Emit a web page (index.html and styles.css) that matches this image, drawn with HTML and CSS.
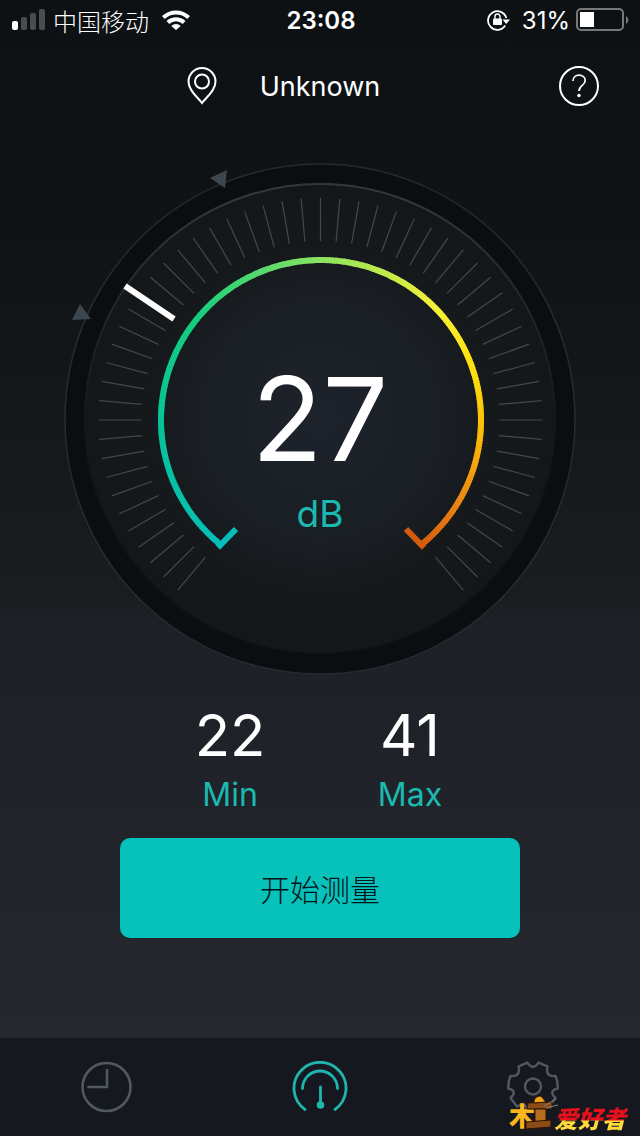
FILE: index.html
```html
<!DOCTYPE html>
<html lang="zh-CN">
<head>
<meta charset="utf-8">
<meta name="viewport" content="width=device-width, initial-scale=1">
<title>dB</title>
<link rel="stylesheet" href="styles.css">
</head>
<body>
<div class="app">
  <header class="status">
    <div class="status-left">
      <svg class="signal" width="34" height="22" viewBox="0 0 34 22" aria-hidden="true">
        <rect x="0" y="12" width="6" height="9" rx="2" fill="#fff"/>
        <g fill="#4b4c4f"><rect x="9" y="8" width="6" height="13" rx="2"/><rect x="18" y="4" width="6" height="17" rx="2"/><rect x="27" y="0" width="6" height="21" rx="2"/></g>
      </svg>
      <span class="carrier">中国移动</span>
      <svg class="wifi" width="28" height="20" viewBox="0 0 28 20" aria-hidden="true">
        <g fill="none" stroke="#fff" stroke-width="4"><path d="M1.400 7.500A18.300 18.300 0 0 1 26.600 7.500"/><path d="M5.900 12.500A12 12 0 0 1 22.100 12.500"/></g>
        <path d="M9.300 16A6.700 6.700 0 0 1 18.700 16L14 20Z" fill="#fff"/>
      </svg>
    </div>
    <time class="clock">23:08</time>
    <div class="status-right">
      <svg class="lock" width="23" height="22" viewBox="0 0 23 22" aria-hidden="true">
        <path d="M18.200 16.500A9.300 9.300 0 1 1 19.300 9" fill="none" stroke="#fff" stroke-width="1.800"/>
        <path d="M15.500 10.500H23L19.200 15Z" fill="#fff"/>
        <rect x="6" y="9.500" width="9" height="6.500" rx="1" fill="#fff"/>
        <path d="M8 10V7.500a2.500 2.500 0 0 1 5 0V10" fill="none" stroke="#fff" stroke-width="1.400"/>
      </svg>
      <span>31%</span>
      <svg class="battery" width="54" height="24" viewBox="0 0 54 24" aria-hidden="true">
        <rect x="1" y="1" width="46" height="21" rx="4" fill="none" stroke="#77787a" stroke-width="2"/>
        <rect x="4" y="4" width="14" height="15" fill="#fff"/>
        <path d="M50 8a4.500 4.500 0 0 1 0 8Z" fill="#77787a"/>
      </svg>
    </div>
  </header>

  <div class="topbar">
    <div class="place">
      <svg width="30" height="38" viewBox="0 0 30 38" fill="none" stroke="#fff" stroke-width="2" aria-hidden="true">
        <path d="M15 36C11 30.500 1.500 24 1.500 14.500a13.500 13.500 0 0 1 27 0C28.500 24 19 30.500 15 36Z"/>
        <circle cx="15" cy="14.500" r="7"/>
      </svg>
      <h1 class="place-name">Unknown</h1>
    </div>
    <button class="help" type="button" aria-label="帮助">
      <svg width="42" height="42" viewBox="0 0 42 42" fill="none" stroke="#fff" aria-hidden="true">
        <circle cx="21" cy="21" r="19" stroke-width="2"/>
        <path d="M15 16c0-3.500 2.500-5.800 6-5.800s6.200 2.200 6.200 5.400c0 5-6.200 4.700-6.200 10.400" stroke-width="1.700"/>
        <circle cx="21" cy="30.500" r="1.700" fill="#fff" stroke="none"/>
      </svg>
    </button>
  </div>

  <main class="main">
    <section class="gauge">
      <div class="dial">
        <svg class="dial-face" viewBox="0 0 520 520" aria-hidden="true">
          <defs>
            <radialGradient id="disc"><stop offset="0" stop-color="#1e222b"/><stop offset=".5" stop-color="#1a1f25"/><stop offset=".72" stop-color="#15191c"/><stop offset="1" stop-color="#13171a"/></radialGradient>
            <linearGradient id="rim" x1="0" y1="0" x2="0" y2="1"><stop offset="0" stop-color="#34383c"/><stop offset=".5" stop-color="#14181b"/><stop offset="1" stop-color="#0c0f12"/></linearGradient>
          </defs>
          <circle cx="260" cy="260" r="255" fill="#0a0e11" stroke="#272b2f" stroke-width="1.500"/>
          <circle cx="260" cy="260" r="235" fill="url(#disc)" stroke="url(#rim)" stroke-width="2"/>
          <g id="ticks" stroke="#43484e" stroke-width="1.200"></g>
          <path d="M65 127L114 160" stroke="#fff" stroke-width="6"/>
          <g fill="#3d464f"><path d="M150 19L167 11L165 29Z"/><path d="M20 145L31 160L12 161Z"/></g>
          <g id="arc" fill="none" stroke-width="6"></g>
          <path d="M157.500 384L160 386.500L176 370" fill="none" stroke="#08bdb8" stroke-width="6"/>
          <path d="M364.500 384L362 386.500L346 370" fill="none" stroke="#d55b0c" stroke-width="6"/>
        </svg>
        <div class="reading">
          <span class="value">27</span>
          <span class="unit">dB</span>
        </div>
      </div>
    </section>

    <dl class="stats">
      <div class="stat"><dt>Min</dt><dd>22</dd></div>
      <div class="stat"><dt>Max</dt><dd>41</dd></div>
    </dl>

    <button class="start" type="button">开始测量</button>
  </main>

  <nav class="tabs">
    <button class="tab" type="button" aria-label="历史">
      <svg width="52" height="52" viewBox="0 0 52 52" fill="none" stroke="currentColor" stroke-width="2.600" aria-hidden="true"><circle cx="25.500" cy="26" r="24"/><path d="M26 9V26H7.500" stroke-linecap="round"/></svg>
    </button>
    <button class="tab tab-active" type="button" aria-label="测量">
      <svg width="56" height="52" viewBox="0 0 56 52" fill="none" stroke="currentColor" stroke-width="2.800" stroke-linecap="round" aria-hidden="true"><path d="M13 48.500A26 26 0 1 1 43 48.500"/><path d="M10.500 27.500A17.500 17.500 0 0 1 45.500 27.500"/><path d="M28.500 26V44"/><circle cx="28.500" cy="44" r="2.400" fill="currentColor"/></svg>
    </button>
    <button class="tab" type="button" aria-label="设置">
      <svg width="52" height="54" viewBox="0 0 52 54" fill="none" stroke="currentColor" stroke-width="2.400" stroke-linejoin="round" aria-hidden="true"><path d="M20.400 2.600Q26 11 31.600 2.600L40.500 6.500Q38 17 48.500 16Q51 21 50.700 28.500Q41 31 48.500 38L42 46.500Q33 41 31.600 51.400H20.400Q19 41 10 46.500L3.500 38Q11 31 1.300 28.500Q1 21 3.500 16Q14 17 11.500 6.500Z"/><circle cx="26" cy="26.500" r="8"/></svg>
    </button>
  </nav>

  <div class="watermark">
    <svg class="mark" width="50" height="40" viewBox="0 0 50 40" aria-hidden="true">
      <text class="mark-wood" x="1" y="32">木</text>
      <g stroke="#2b1300" stroke-width="1"><path d="M20 9L44 8V15H19Z" fill="#8a4d16"/><path d="M27 15H38V28H27Z" fill="#b76c22"/><path d="M18 28L43 26V33L18 35Z" fill="#8a4d16"/><path d="M26 7Q27 2 33 2L38 8L26 9Z" fill="#f0a51a"/></g>
      <path d="M36 12L48 5M38 14L50 11" stroke="#8b8578"/>
    </svg>
    <span class="mark-name">爱好者</span>
  </div>
</div>
<script src="gauge.js"></script>
</body>
</html>
```
FILE: styles.css
```css
* { box-sizing: border-box; }
body {
  margin: 0;
  background: #23272e;
  color: #fff;
  font-family: Inter, "Noto Sans CJK SC", sans-serif;
}
button { border: 0; padding: 0; background: none; color: inherit; font: inherit; cursor: pointer; }
svg { display: block; flex: none; }
h1, dl, dd { margin: 0; font-weight: 400; }
.app {
  position: relative;
  display: flex;
  flex-direction: column;
  min-height: 100vh;
  background: linear-gradient(#0d1113 0, #0f1315 20%, #191d1f 52%, #1d2127 55%, #24272e 90%);
}
.status {
  display: grid;
  grid-template-columns: 1fr auto 1fr;
  align-items: center;
  height: 40px;
  padding: 0 10px 0 12px;
  font-size: 24px;
}
.status-left, .status-right { display: flex; align-items: center; }
.status-left { gap: 7px; }
.carrier { font-weight: 300; }
.wifi { margin-left: 6px; }
.status-right { justify-content: flex-end; gap: 6px; }
.lock { margin-right: 6px; }
.clock { font-weight: 600; }
.topbar {
  display: grid;
  grid-template-columns: 1fr auto 1fr;
  align-items: center;
  height: 92px;
  padding: 0 40px;
}
.place { grid-column: 2; display: flex; align-items: center; gap: 43px; margin-right: 73px; }
.place-name { font-size: 27px; }
.help { justify-self: end; }
.main { flex: 1; display: flex; flex-direction: column; align-items: center; }
.gauge { width: 100%; display: flex; justify-content: center; padding: 0 40px; margin-top: 27px; }
.dial { display: grid; width: 100%; max-width: 520px; }
.dial-face, .reading { grid-area: 1 / 1; }
.dial-face { width: 100%; }
.reading { display: flex; flex-direction: column; align-items: center; justify-content: center; padding-top: 50px; }
.value { font-size: 116px; line-height: 140px; }
.unit { font-size: 37px; line-height: 50px; color: #1bb9b0; }
.stats { display: grid; grid-template-columns: 180px 180px; margin-top: 20px; }
.stat { display: flex; flex-direction: column-reverse; align-items: center; }
.stat dt { font-size: 32px; line-height: 48px; color: #1bb9b0; }
.stat dd { font-size: 58px; line-height: 72px; }
.start {
  width: 62.5%;
  height: 100px;
  margin-top: 19px;
  border-radius: 10px;
  background: #07c1bb;
  color: #061517;
  font-size: 30px;
  font-weight: 300;
}
.tabs { display: grid; grid-template-columns: repeat(3, 1fr); height: 98px; background: #15181f; }
.tab { display: flex; align-items: center; justify-content: center; color: #505862; }
.tab-active { color: #1fb5ad; }
.watermark { position: absolute; right: 12px; bottom: 2px; display: flex; align-items: flex-end; }
.mark { overflow: visible; margin-right: -4px; }
.mark-wood { font: 900 26px "Noto Sans CJK SC", sans-serif; fill: #f8b51c; }
.mark-name {
  padding: 0 2px 2px 0;
  font: italic 900 24px/28px "Noto Sans CJK SC", sans-serif;
  background: linear-gradient(#e8101c 52%, #ffd83a 58%);
  background-clip: text;
  -webkit-background-clip: text;
  color: transparent;
}
```
FILE: gauge.js
```js
const NS = 'http://www.w3.org/2000/svg';
const point = (cx, cy, r, deg) => {
  const a = deg * Math.PI / 180;
  return `${(cx + r * Math.sin(a)).toFixed(2)} ${(cy - r * Math.cos(a)).toFixed(2)}`;
};
function add(parent, d, color) {
  const path = document.createElementNS(NS, 'path');
  path.setAttribute('d', d);
  if (color) path.setAttribute('stroke', color);
  parent.appendChild(path);
}

const ticks = document.getElementById('ticks');
for (let deg = -140; deg <= 140; deg += 5) {
  if (deg !== -55) add(ticks, `M${point(260.5, 261, 179, deg)}L${point(260.5, 261, 222, deg)}`);
}

const stops = [
  [-141, [8, 189, 184]], [-90, [8, 195, 150]], [-50, [22, 205, 125]],
  [0, [140, 228, 95]], [45, [245, 240, 55]], [70, [255, 225, 15]],
  [95, [252, 185, 10]], [120, [235, 135, 20]], [141, [213, 91, 12]]
];
function colorAt(deg) {
  const i = Math.max(1, stops.findIndex(s => s[0] >= deg));
  const [d0, a] = stops[i - 1];
  const [d1, b] = stops[i];
  const t = (deg - d0) / (d1 - d0);
  return `rgb(${a.map((v, k) => Math.round(v + (b[k] - v) * t)).join(',')})`;
}
const arc = document.getElementById('arc');
for (let deg = -141; deg < 141; deg += 1) {
  const end = Math.min(141, deg + 1.5);
  add(arc, `M${point(261, 261, 160, deg)}A160 160 0 0 1 ${point(261, 261, 160, end)}`, colorAt(deg));
}
```
